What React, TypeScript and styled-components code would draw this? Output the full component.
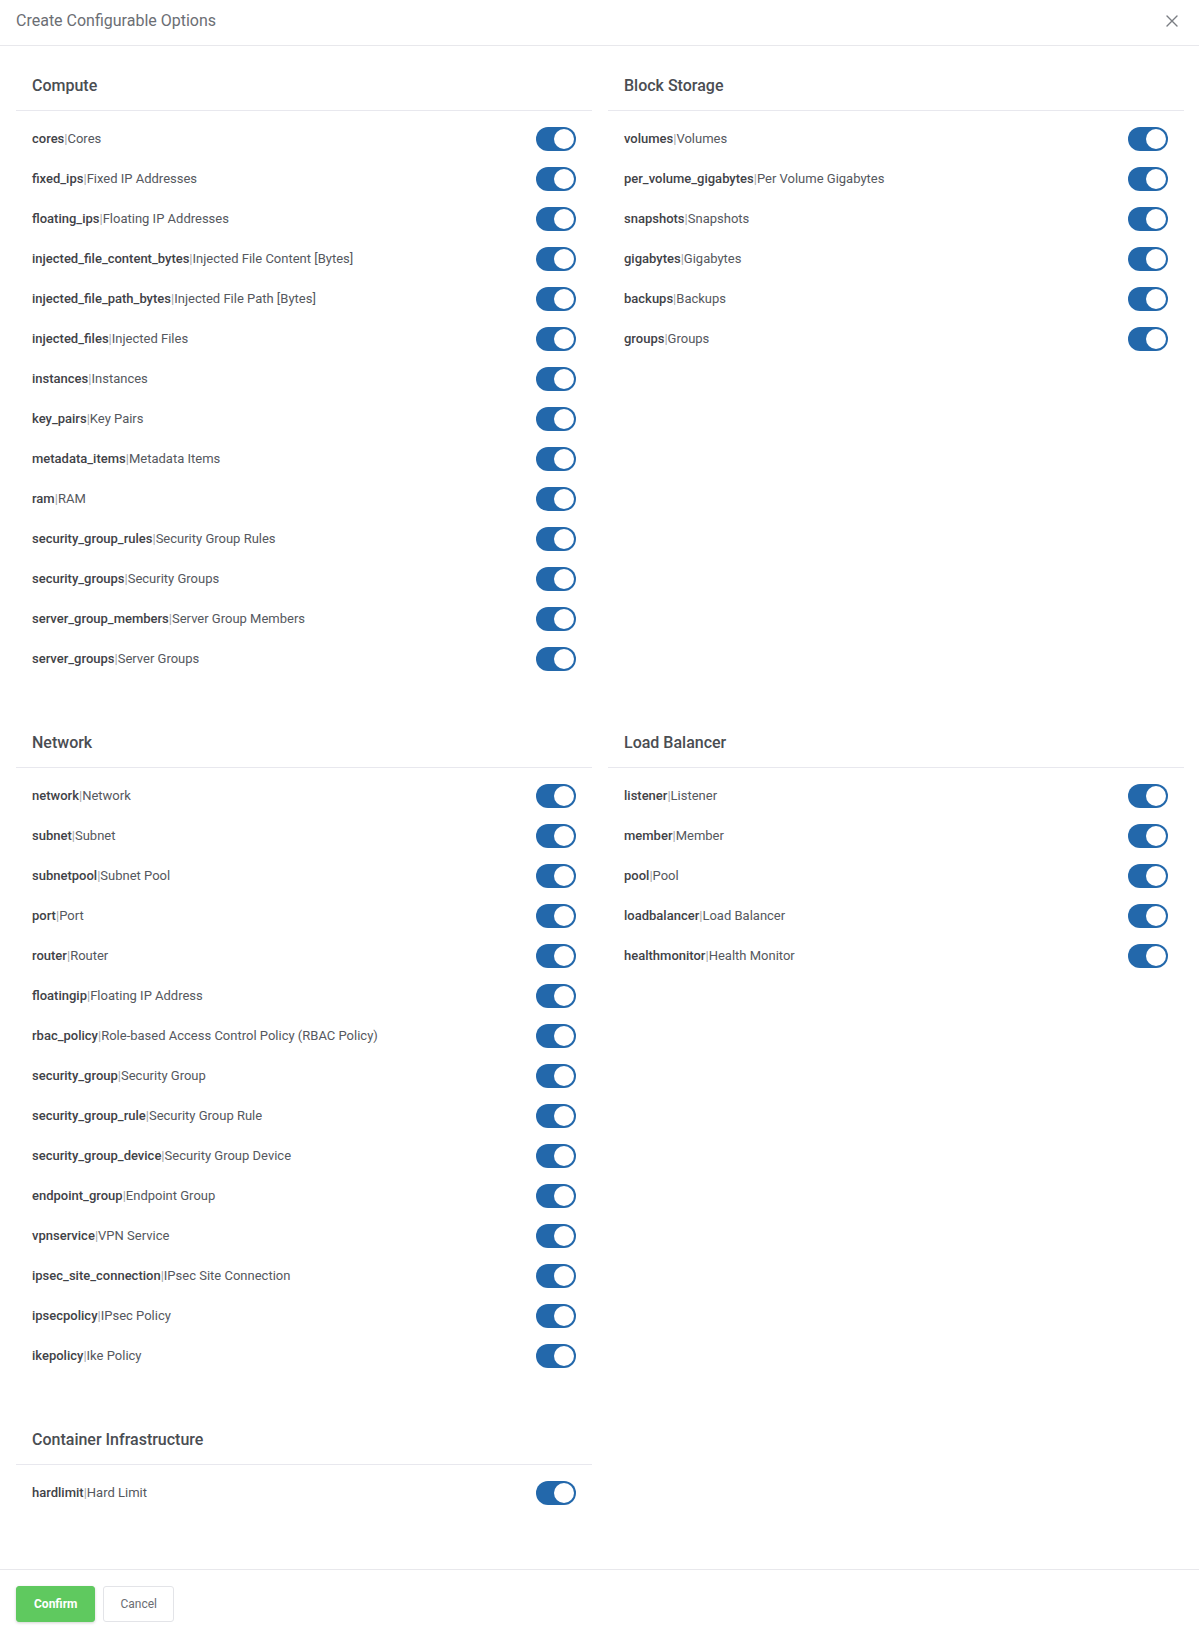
import React from "react";
import styled, { createGlobalStyle } from "styled-components";

const Global = createGlobalStyle`
  html, body { margin: 0; padding: 0; background: #fff; }
  body { font-family: Roboto, "Noto Sans", Arial, sans-serif; -webkit-font-smoothing: antialiased; }
  * { box-sizing: border-box; }
`;

const Modal = styled.div`
  width: 1199px;
  min-height: 1636px;
  display: flex;
  flex-direction: column;
  background: #fff;
`;

const Header = styled.div`
  height: 46px;
  display: flex;
  align-items: center;
  justify-content: space-between;
  padding: 0 16px;
  border-bottom: 1px solid #e8e8ec;
`;

const Title = styled.div`
  font-size: 16px;
  color: #6b6e74;
  line-height: 20px;
  margin-top: -4px;
`;

const CloseBtn = styled.button`
  border: 0;
  background: transparent;
  padding: 0;
  width: 20px;
  height: 20px;
  display: flex;
  align-items: center;
  justify-content: center;
  margin-right: 1px;
  margin-top: -4px;
  cursor: pointer;
`;

const Body = styled.div`
  flex: 1;
  padding: 16px 15px 16px 16px;
  display: grid;
  grid-template-columns: 576px 576px;
  column-gap: 16px;
  align-content: start;
`;

const Section = styled.section`
  margin-bottom: 40px;
`;

const SectionTitle = styled.h3`
  margin: 0;
  height: 49px;
  padding: 0 16px 1px;
  display: flex;
  align-items: center;
  font-size: 16px;
  font-weight: 500;
  color: #4a4d52;
  border-bottom: 1px solid #e8e8ee;
`;

const Rows = styled.div`
  padding-top: 8px;
  display: flex;
  flex-direction: column;
`;

const Row = styled.div`
  height: 40px;
  display: flex;
  align-items: center;
  justify-content: space-between;
  padding: 0 16px;
`;

const Label = styled.div`
  font-size: 13px;
  color: #55585e;
  margin-top: -1px;
`;

const Key = styled.span`
  font-weight: 500;
  color: #3f4247;
`;

const Sep = styled.span`
  color: #a0a3a8;
`;

const Track = styled.span<{ $on: boolean }>`
  width: 40px;
  height: 24px;
  border-radius: 12px;
  background: ${(p) => (p.$on ? "#2368ab" : "#c4c7cc")};
  display: flex;
  align-items: center;
  justify-content: ${(p) => (p.$on ? "flex-end" : "flex-start")};
  padding: 2px;
`;

const Knob = styled.span`
  width: 20px;
  height: 20px;
  border-radius: 50%;
  background: #fff;
`;

const Footer = styled.div`
  border-top: 1px solid #e8e8ec;
  padding: 16px 16px 14px;
  display: flex;
  gap: 8px;
`;

const Button = styled.button<{ $primary?: boolean }>`
  height: 36px;
  padding: 0 ${(p) => (p.$primary ? "17px" : "16px")};
  border-radius: 3px;
  font-family: inherit;
  font-size: 12px;
  font-weight: ${(p) => (p.$primary ? 700 : 400)};
  color: ${(p) => (p.$primary ? "#fff" : "#6b6e74")};
  background: ${(p) => (p.$primary ? "#5fc95f" : "#fff")};
  border: 1px solid ${(p) => (p.$primary ? "#5fc95f" : "#e3e4e8")};
  box-shadow: ${(p) => (p.$primary ? "0 1px 3px rgba(0,0,0,0.18)" : "none")};
  cursor: pointer;
`;

type Item = [string, string];

const sections: { title: string; items: Item[] }[] = [
  {
    title: "Compute",
    items: [
      ["cores", "Cores"],
      ["fixed_ips", "Fixed IP Addresses"],
      ["floating_ips", "Floating IP Addresses"],
      ["injected_file_content_bytes", "Injected File Content [Bytes]"],
      ["injected_file_path_bytes", "Injected File Path [Bytes]"],
      ["injected_files", "Injected Files"],
      ["instances", "Instances"],
      ["key_pairs", "Key Pairs"],
      ["metadata_items", "Metadata Items"],
      ["ram", "RAM"],
      ["security_group_rules", "Security Group Rules"],
      ["security_groups", "Security Groups"],
      ["server_group_members", "Server Group Members"],
      ["server_groups", "Server Groups"],
    ],
  },
  {
    title: "Block Storage",
    items: [
      ["volumes", "Volumes"],
      ["per_volume_gigabytes", "Per Volume Gigabytes"],
      ["snapshots", "Snapshots"],
      ["gigabytes", "Gigabytes"],
      ["backups", "Backups"],
      ["groups", "Groups"],
    ],
  },
  {
    title: "Network",
    items: [
      ["network", "Network"],
      ["subnet", "Subnet"],
      ["subnetpool", "Subnet Pool"],
      ["port", "Port"],
      ["router", "Router"],
      ["floatingip", "Floating IP Address"],
      ["rbac_policy", "Role-based Access Control Policy (RBAC Policy)"],
      ["security_group", "Security Group"],
      ["security_group_rule", "Security Group Rule"],
      ["security_group_device", "Security Group Device"],
      ["endpoint_group", "Endpoint Group"],
      ["vpnservice", "VPN Service"],
      ["ipsec_site_connection", "IPsec Site Connection"],
      ["ipsecpolicy", "IPsec Policy"],
      ["ikepolicy", "Ike Policy"],
    ],
  },
  {
    title: "Load Balancer",
    items: [
      ["listener", "Listener"],
      ["member", "Member"],
      ["pool", "Pool"],
      ["loadbalancer", "Load Balancer"],
      ["healthmonitor", "Health Monitor"],
    ],
  },
  {
    title: "Container Infrastructure",
    items: [["hardlimit", "Hard Limit"]],
  },
];

function Toggle({ on }: { on: boolean }) {
  return (
    <Track $on={on} role="switch" aria-checked={on}>
      <Knob />
    </Track>
  );
}

export default function App() {
  return (
    <>
      <Global />
      <Modal>
        <Header>
          <Title>Create Configurable Options</Title>
          <CloseBtn aria-label="close">
            <svg width="12" height="12" viewBox="0 0 12 12">
              <path d="M1 1 L11 11 M11 1 L1 11" stroke="#7a7d83" strokeWidth="1.4" strokeLinecap="round" />
            </svg>
          </CloseBtn>
        </Header>
        <Body>
          {sections.map((s) => (
            <Section key={s.title}>
              <SectionTitle>{s.title}</SectionTitle>
              <Rows>
                {s.items.map(([k, l]) => (
                  <Row key={k}>
                    <Label>
                      <Key>{k}</Key>
                      <Sep>|</Sep>
                      {l}
                    </Label>
                    <Toggle on />
                  </Row>
                ))}
              </Rows>
            </Section>
          ))}
        </Body>
        <Footer>
          <Button $primary>Confirm</Button>
          <Button>Cancel</Button>
        </Footer>
      </Modal>
    </>
  );
}
